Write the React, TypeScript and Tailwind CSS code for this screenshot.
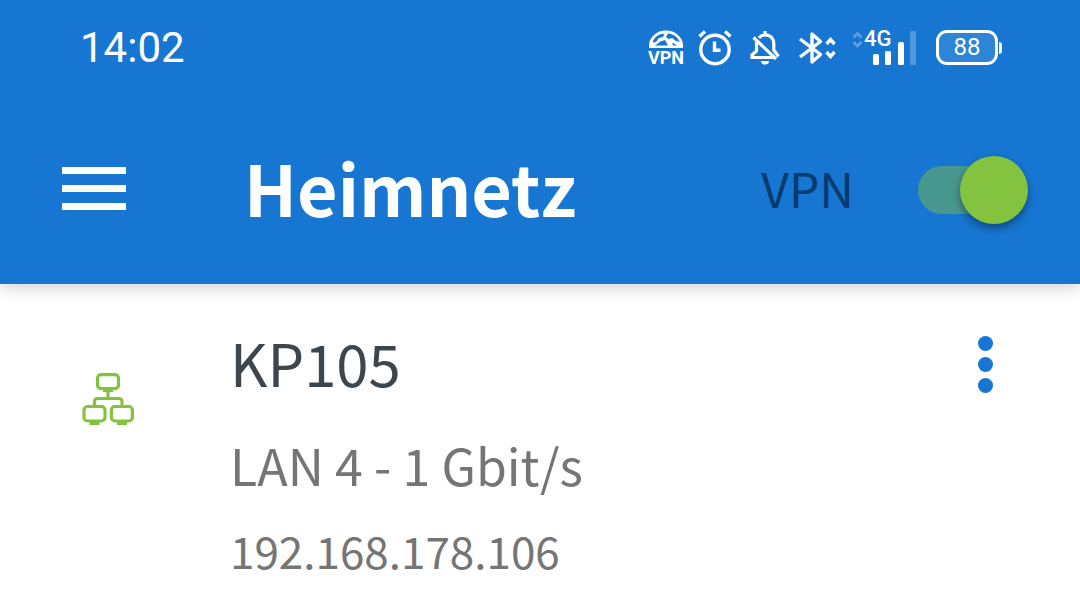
import { useState } from "react";

const devices = [
  {
    name: "KP105",
    connection: "LAN 4 - 1 Gbit/s",
    ip: "192.168.178.106",
  },
];

function VpnIcon() {
  return (
    <div className="flex w-9 flex-col items-center">
      <svg viewBox="0 0 36 18" className="h-[18px] w-9" aria-hidden="true">
        <path d="M1 18V15.500a17 15 0 0 1 34 0V18z" fill="white" />
        <path d="M13 4C8.500 5.500 5.500 8.500 4.500 12.500l3.500-.5 3-4 4-1 1.500-3.200zM20 3.500l-2 3.500 2.500 2 4-1 2.500 2.500 4.500 1.500c-1.500-4.500-5.500-8-11.500-8.500zM7 15.500l5.500-4 4.500-1.500 3 5.500zM24 12.500l5 3h-4z" fill="#1776d2" />
      </svg>
      <span className="mt-0.5 font-[Roboto,sans-serif] text-lg leading-4 font-bold">VPN</span>
    </div>
  );
}

function AlarmIcon() {
  return (
    <svg viewBox="0 0 36 38" className="h-[38px] w-9" fill="none" stroke="white" strokeWidth="3.400" aria-hidden="true">
      <circle cx="17" cy="20.500" r="14.200" />
      <path d="M16.500 12.500v8.800h6M1.500 7.500l5.500-5M32.500 7.500l-5.500-5" />
    </svg>
  );
}

function MutedBellIcon() {
  return (
    <svg viewBox="0 0 32 36" className="h-9 w-8" fill="none" stroke="white" strokeWidth="3.200" aria-hidden="true">
      <path d="M9 8C11 5.500 13 4.800 15 4.800c5.500 0 8.800 4 8.800 9.200V20l4.700 6.500M6.500 12v9L2 25V27.500H24.500M3.500 7.500L26 29M15 1v4" />
      <path d="M11 31h8a4 3.500 0 0 1-8 0z" fill="white" stroke="none" />
    </svg>
  );
}

function BluetoothIcon() {
  return (
    <svg viewBox="0 0 40 36" className="h-9 w-10" fill="none" stroke="white" strokeWidth="3.400" aria-hidden="true">
      <path d="M2 9l20.500 15.500-8.500 7.500v-28l8.500 7.500L2 27" strokeLinejoin="round" />
      <path d="M28.500 14l4-4.500 4 4.500M28.500 22l4 4.500 4-4.500" />
    </svg>
  );
}

function SignalIcon() {
  return (
    <div className="relative h-9 w-16">
      <svg viewBox="0 0 64 36" className="h-9 w-16" aria-hidden="true">
        <path d="M1.500 7.500l4-4 4 4M1.500 12l4 4 4-4" fill="none" stroke="white" strokeWidth="2.800" opacity=".3" />
        <g fill="white">
          <rect x="21" y="24" width="6" height="11" rx="1.500" />
          <rect x="33" y="21" width="6" height="14" rx="1.500" />
          <rect x="46" y="12" width="6" height="23" rx="1.500" />
          <rect x="58" y="1" width="6" height="34" rx="1.500" opacity=".25" />
        </g>
      </svg>
      <span className="absolute -top-px left-3 font-[Roboto,sans-serif] text-[22px] leading-5 font-medium">4G</span>
    </div>
  );
}

function Battery({ level }: { level: number }) {
  return (
    <div className="flex items-center gap-px">
      <div className="flex h-[35px] w-[62px] items-center justify-center rounded-[11px] border-3 border-white bg-white/10 pb-0.5 font-[Roboto,sans-serif] text-2xl leading-6">
        {level}
      </div>
      <div className="h-3 w-[3px] rounded-r-sm bg-white" />
    </div>
  );
}

function StatusBar() {
  return (
    <div className="flex h-[95px] items-center justify-between pr-[78px] pl-20">
      <span className="font-[Roboto,sans-serif] text-[42px] leading-none">14:02</span>
      <div className="flex items-center">
        <VpnIcon />
        <div className="ml-3.5">
          <AlarmIcon />
        </div>
        <div className="ml-4">
          <MutedBellIcon />
        </div>
        <div className="ml-4">
          <BluetoothIcon />
        </div>
        <div className="ml-3.5">
          <SignalIcon />
        </div>
        <div className="ml-5">
          <Battery level={88} />
        </div>
      </div>
    </div>
  );
}

function NetworkIcon() {
  return (
    <svg viewBox="0 0 52 54" className="h-[54px] w-[52px]" fill="none" stroke="#84c340" strokeWidth="3.200" aria-hidden="true">
      <rect x="15.500" y="1.600" width="21" height="14" rx="3.500" />
      <path d="M21 17.500h10M26 18v8M12.500 33v-4.500q0-3 3-3h21.500q3 0 3 3V33" />
      <rect x="2" y="33.500" width="21" height="14.500" rx="3.500" />
      <rect x="29.400" y="33.500" width="21" height="14.500" rx="3.500" />
      <path d="M7.500 50.500h10M35 50.500h10" />
    </svg>
  );
}

export default function App() {
  const [vpn, setVpn] = useState(true);

  return (
    <div className="min-h-screen bg-white font-['Noto_Sans_CJK_SC',sans-serif]">
      <header className="bg-[#1776d2] text-white shadow-[0_4px_16px_rgba(0,0,0,0.18)]">
        <StatusBar />

        {/* Toolbar */}
        <div className="flex h-[189px] items-start pt-14 pr-[52px] pl-[62px]">
          <button type="button" aria-label="Menu" className="mt-4 flex w-16 flex-col gap-[11px]">
            <span className="h-[7px] bg-white" />
            <span className="h-[7px] bg-white" />
            <span className="h-[7px] bg-white" />
          </button>
          <h1 className="ml-[118px] text-[70px] leading-[72px] font-bold">Heimnetz</h1>
          <label className="ml-auto flex cursor-pointer items-start">
            <span className="mt-2 text-5xl leading-[56px] text-[#053c70]">VPN</span>
            <input
              type="checkbox"
              role="switch"
              checked={vpn}
              onChange={(e) => setVpn(e.target.checked)}
              className="peer sr-only"
            />
            <span className="relative mt-[15px] ml-16 h-12 w-[110px] peer-checked:[&>i]:right-0 peer-checked:[&>b]:bg-[#84c340]/45">
              <b className="absolute inset-y-0 right-3 left-0 rounded-full bg-black/30" />
              <i className="absolute -top-2.5 right-[42px] size-[68px] rounded-full bg-[#84c340] shadow-[0_4px_8px_rgba(0,0,0,0.4)]" />
            </span>
          </label>
        </div>
      </header>

      <ul>
        {devices.map((device) => (
          <li key={device.ip} className="flex items-start pt-[46px] pr-20 pl-[82px]">
            <div className="mt-[43px]">
              <NetworkIcon />
            </div>
            <div className="ml-24 flex-1">
              <h2 className="text-[58px] leading-[64px] text-[#3d464d]">{device.name}</h2>
              <p className="mt-[38px] text-[50px] leading-[64px] text-[#757575]">{device.connection}</p>
              <p className="mt-[22px] text-[44px] leading-[64px] text-[#757575]">{device.ip}</p>
            </div>
            <button type="button" aria-label="Mehr" className="mt-1.5 flex w-[30px] flex-col items-center gap-1.5">
              <span className="size-[15px] rounded-full bg-[#1776d2]" />
              <span className="size-[15px] rounded-full bg-[#1776d2]" />
              <span className="size-[15px] rounded-full bg-[#1776d2]" />
            </button>
          </li>
        ))}
      </ul>
    </div>
  );
}
